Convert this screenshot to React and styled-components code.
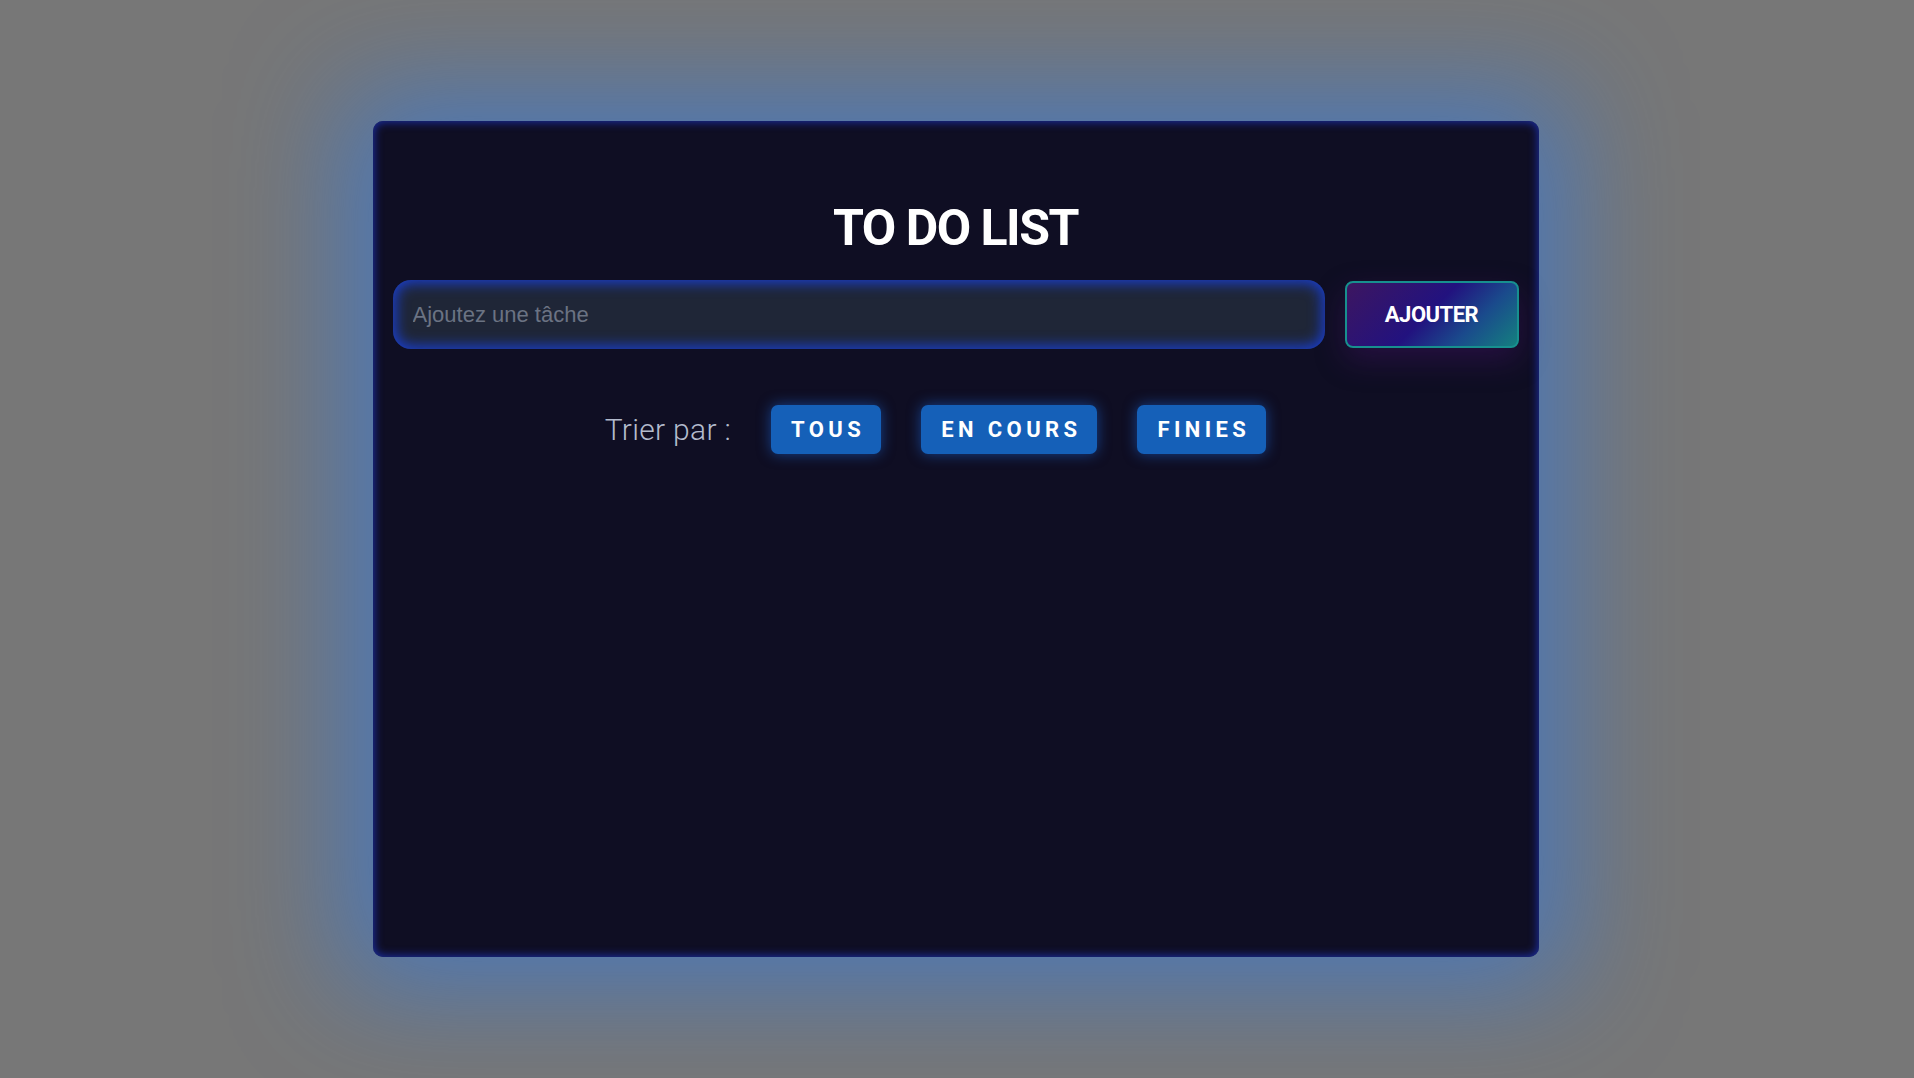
import React, { useState } from 'react'
import styled, { createGlobalStyle } from 'styled-components'

const GlobalStyle = createGlobalStyle`
  html, body {
    margin: 0;
    padding: 0;
    background: #777777;
  }
  * { box-sizing: border-box; }
`

const Page = styled.div`
  width: 100%;
  height: 100vh;
  display: flex;
  align-items: center;
  justify-content: center;
  background: #777777;
`

const Card = styled.div`
  width: 1166px;
  height: 836px;
  margin-right: 3px;
  background: #0f0e23;
  border-radius: 10px;
  padding: 0 20px;
  display: flex;
  flex-direction: column;
  box-shadow:
    inset 0 0 10px 1px #1b2fa8,
    0 0 110px 30px rgba(40, 120, 235, 0.55);
`

const Title = styled.h1`
  margin: 77px 0 0;
  text-align: center;
  color: #ffffff;
  font-family: Roboto, "Liberation Sans", sans-serif;
  font-weight: 700;
  font-size: 50px;
  letter-spacing: -1.5px;
  line-height: 60px;
`

const FormRow = styled.div`
  display: flex;
  gap: 20px;
  margin-top: 22px;
  align-items: center;
`

const Input = styled.input`
  flex: 1;
  height: 69px;
  border: none;
  outline: none;
  border-radius: 18px;
  background: #1f2637;
  padding: 0 20px;
  font-family: "Liberation Sans", Arial, sans-serif;
  font-size: 22px;
  color: #e5e7eb;
  box-shadow: inset 0 0 14px 3px #1a3fd0;
  &::placeholder { color: #6b7383; }
`

const AddButton = styled.button`
  width: 174px;
  height: 67px;
  border: 2px solid #17908f;
  border-radius: 8px;
  background: linear-gradient(135deg, #3d1660 0%, #22127f 48%, #1a4a8c 72%, #14807f 100%);
  color: #ffffff;
  font-family: Roboto, "Liberation Sans", sans-serif;
  font-weight: 700;
  font-size: 22px;
  letter-spacing: -0.5px;
  cursor: pointer;
  box-shadow: 0 12px 30px rgba(80, 20, 120, 0.35);
`

const FilterRow = styled.div`
  display: flex;
  align-items: center;
  justify-content: center;
  gap: 40px;
  margin-top: 56px;
  padding-right: 40px;
`

const FilterLabel = styled.span`
  color: #b3bbcd;
  font-family: Roboto, "Liberation Sans", sans-serif;
  font-weight: 300;
  font-size: 30px;
  letter-spacing: 0.3px;
`

const FilterButton = styled.button`
  height: 49px;
  padding: 0 16px 0 20px;
  border: none;
  border-radius: 7px;
  background: #1560b8;
  color: #ffffff;
  font-family: Roboto, "Liberation Sans", sans-serif;
  font-weight: 700;
  font-size: 22px;
  letter-spacing: 4.4px;
  cursor: pointer;
  box-shadow: 0 0 14px rgba(30, 110, 230, 0.55);
`

export default function App() {
  const [task, setTask] = useState('')
  const filters = ['TOUS', 'EN COURS', 'FINIES']

  return (
    <Page>
      <GlobalStyle />
      <Card>
        <Title>TO DO LIST</Title>
        <FormRow>
          <Input
            placeholder="Ajoutez une tâche"
            value={task}
            onChange={(e) => setTask(e.target.value)}
          />
          <AddButton>AJOUTER</AddButton>
        </FormRow>
        <FilterRow>
          <FilterLabel>Trier par :</FilterLabel>
          {filters.map((f) => (
            <FilterButton key={f}>{f}</FilterButton>
          ))}
        </FilterRow>
      </Card>
    </Page>
  )
}
